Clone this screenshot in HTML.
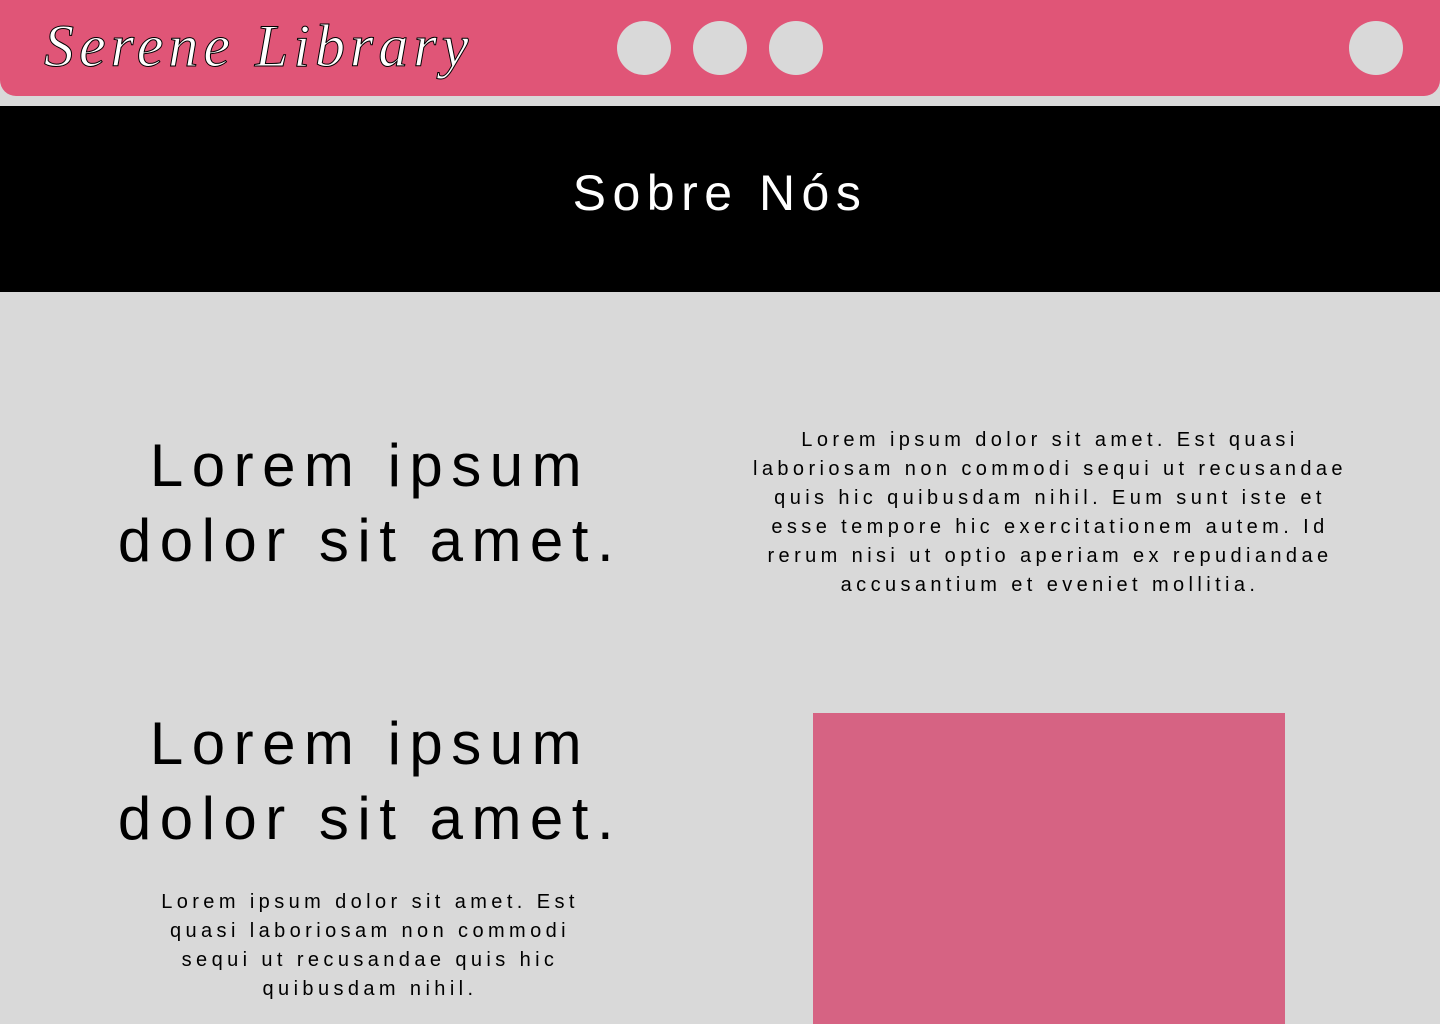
<!DOCTYPE html>
<html><head><meta charset="utf-8"><style>
*{margin:0;padding:0;box-sizing:border-box}
body{width:1440px;height:1024px;overflow:hidden;background:#d9d9d9;position:relative;font-family:"Liberation Sans",sans-serif}
.hdr{position:absolute;left:0;top:0;width:1440px;height:96px;background:#e05577;border-radius:0 0 16px 16px}
.logo{position:absolute;left:44px;top:12px;font-family:"Liberation Serif",serif;font-style:italic;font-size:60px;color:#fff;-webkit-text-stroke:1px #000;letter-spacing:5px;white-space:nowrap}
.c{position:absolute;top:21px;width:54px;height:54px;border-radius:50%;background:#d9d9d9}
.band{position:absolute;left:0;top:106px;width:1440px;height:186px;background:#000}
.title{position:absolute;left:0;width:1440px;top:161px;text-align:center;color:#fff;font-size:50px;letter-spacing:6.5px;line-height:64px}
.h{position:absolute;text-align:center;white-space:nowrap;color:#000;font-size:60px;letter-spacing:8.5px;line-height:75px}
.p{position:absolute;text-align:center;white-space:nowrap;color:#000;font-size:20px;letter-spacing:4.4px;line-height:29px}
.box{position:absolute;left:813px;top:713px;width:472px;height:311px;background:#d66383}
</style></head><body>
<div class="hdr">
<div class="logo">Serene Library</div>
<div class="c" style="left:617px"></div>
<div class="c" style="left:693px"></div>
<div class="c" style="left:769px"></div>
<div class="c" style="left:1349px"></div>
</div>
<div class="band"></div>
<div class="title">Sobre Nós</div>
<div class="h" style="left:70px;width:600px;top:428px">Lorem ipsum<br>dolor sit amet.</div>
<div class="p" style="left:700px;width:700px;top:426px">Lorem ipsum dolor sit amet. Est quasi<br>laboriosam non commodi sequi ut recusandae<br>quis hic quibusdam nihil. Eum sunt iste et<br>esse tempore hic exercitationem autem. Id<br>rerum nisi ut optio aperiam ex repudiandae<br>accusantium et eveniet mollitia.</div>
<div class="h" style="left:70px;width:600px;top:706px">Lorem ipsum<br>dolor sit amet.</div>
<div class="p" style="left:70px;width:600px;top:888px">Lorem ipsum dolor sit amet. Est<br>quasi laboriosam non commodi<br>sequi ut recusandae quis hic<br>quibusdam nihil.</div>
<div class="box"></div>
</body></html>
